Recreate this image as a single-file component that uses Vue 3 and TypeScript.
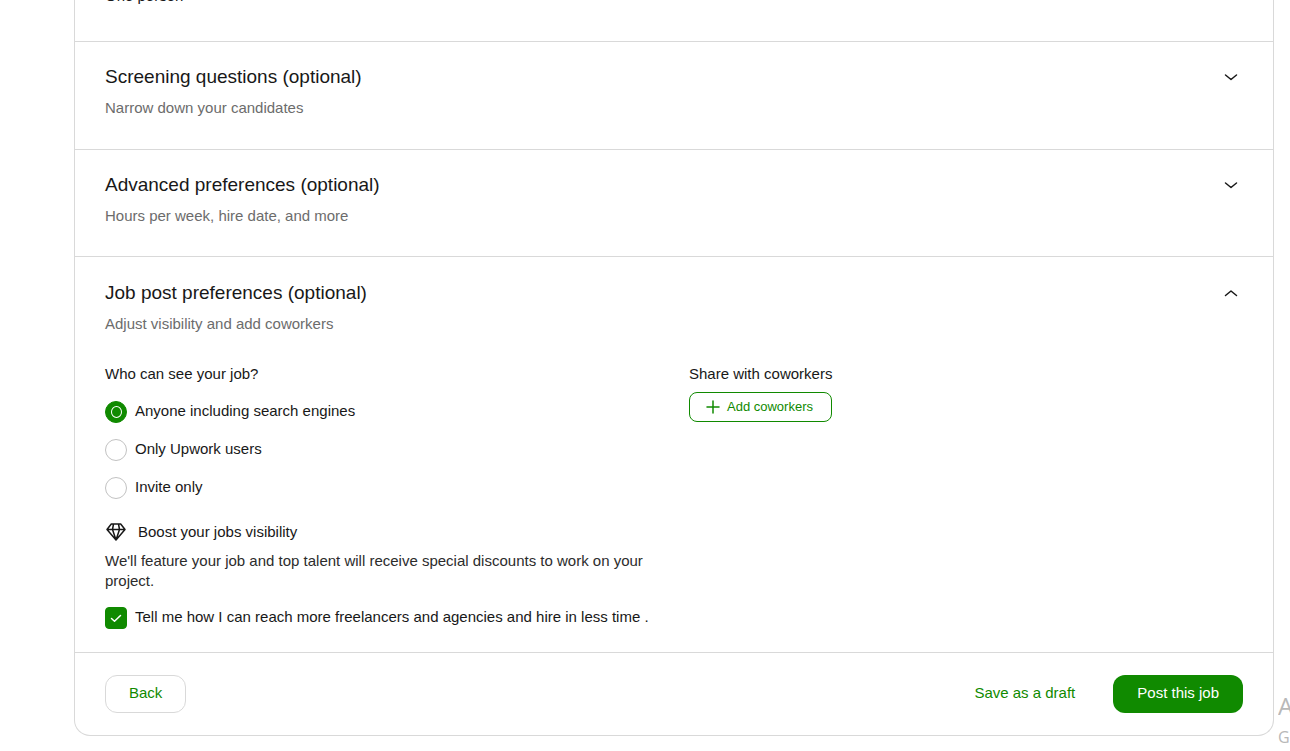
<script setup lang="ts">
import { ref } from 'vue'

interface Panel {
  id: string
  title: string
  hint: string
}

const panels: Panel[] = [
  { id: 'screening', title: 'Screening questions (optional)', hint: 'Narrow down your candidates' },
  { id: 'advanced', title: 'Advanced preferences (optional)', hint: 'Hours per week, hire date, and more' },
]

const audiences = [
  { value: 'anyone', label: 'Anyone including search engines' },
  { value: 'members', label: 'Only Upwork users' },
  { value: 'invite', label: 'Invite only' },
]

const audience = ref('anyone')
const boost = ref(true)
const open = ref(true)
</script>

<template>
  <main class="page">
    <form class="card" @submit.prevent>
      <section class="panel talent">One person</section>

      <section v-for="panel in panels" :key="panel.id" class="panel" :class="panel.id">
        <header class="head">
          <h2 class="title">{{ panel.title }}</h2>
          <button class="toggle" type="button" :aria-label="`Expand ${panel.title}`" aria-expanded="false">
            <svg viewBox="0 0 14 8" width="14" height="8"><path d="M1.500 2 7 6.500 12.500 2" /></svg>
          </button>
        </header>
        <p class="hint">{{ panel.hint }}</p>
      </section>

      <section class="panel visibility">
        <header class="head">
          <h2 class="title">Job post preferences (optional)</h2>
          <button class="toggle" type="button" aria-label="Toggle job post preferences" :aria-expanded="open" @click="open = !open">
            <svg viewBox="0 0 14 8" width="14" height="8"><path d="M1.500 6.500 7 2 12.500 6.500" /></svg>
          </button>
        </header>
        <p class="hint">Adjust visibility and add coworkers</p>

        <div v-show="open" class="columns">
          <div>
            <fieldset class="audience">
              <legend class="label">Who can see your job?</legend>
              <label v-for="item in audiences" :key="item.value" class="choice">
                <input v-model="audience" class="radio" type="radio" name="audience" :value="item.value" />
                <span>{{ item.label }}</span>
              </label>
            </fieldset>

            <h3 class="boost">
              <svg class="gem" viewBox="0 0 22 20" width="22" height="20">
                <path d="M6.300 2h9.400L20 7.500 11 18 2 7.500zM2 7.500h18M8.500 2 7.500 7.500 11 18l3.500-10.500L13.500 2" />
              </svg>
              Boost your jobs visibility
            </h3>
            <p class="text">We'll feature your job and top talent will receive special discounts to work on your project.</p>
            <label class="choice">
              <span class="tick">
                <input v-model="boost" class="check" type="checkbox" />
                <svg v-if="boost" viewBox="0 0 22 22" width="22" height="22"><path d="M6.500 11.500 9.500 14.200 15.500 8.500" /></svg>
              </span>
              <span>Tell me how I can reach more freelancers and agencies and hire in less time .</span>
            </label>
          </div>

          <div>
            <p class="label">Share with coworkers</p>
            <button class="btn add" type="button">
              <svg viewBox="0 0 14 14" width="14" height="14"><path d="M7 1v12M1 7h12" /></svg>
              Add coworkers
            </button>
          </div>
        </div>
      </section>

      <footer class="actions">
        <button class="btn back" type="button">Back</button>
        <button class="btn draft" type="button">Save as a draft</button>
        <button class="btn post" type="submit">Post this job</button>
      </footer>
    </form>

    <aside class="system">
      <span class="system-title">A</span>
      <span class="system-text">G</span>
    </aside>
  </main>
</template>

<style>
body {
  margin: 0;
  background: #fff;
}
</style>

<style scoped>
.page {
  position: relative;
  min-height: 100vh;
  overflow: hidden;
  box-sizing: border-box;
  padding: 0 16px 0 74px;
  font: 15px/20px "Liberation Sans", Arial, sans-serif;
  color: #181818;
}
.card {
  border: 1px solid #d9d9d9;
  border-top: 0;
  border-radius: 0 0 16px 16px;
}
.panel {
  padding: 23px 30px;
  border-bottom: 1px solid #d9d9d9;
}
.screening {
  padding-bottom: 31px;
}
.advanced {
  padding-bottom: 30px;
}
.visibility {
  padding-top: 24px;
}
.talent {
  margin-top: -14px;
  padding-top: 0;
  padding-bottom: 35px;
}
.head {
  display: flex;
  align-items: center;
  justify-content: space-between;
}
.title,
.boost,
.hint,
.text,
.label {
  margin: 0;
  font-weight: 400;
}
.title {
  font-size: 19px;
  line-height: 24px;
}
.hint {
  margin-top: 9px;
  color: #6c6c6c;
}
.toggle {
  display: flex;
  padding: 4px;
  margin-right: 1px;
  border: 0;
  background: none;
  color: #181818;
  cursor: pointer;
}
svg {
  fill: none;
  stroke: currentColor;
  stroke-width: 1.5;
  stroke-linecap: round;
  stroke-linejoin: round;
}
.columns {
  display: grid;
  grid-template-columns: 1fr 1fr;
  gap: 30px;
  margin-top: 30px;
}
.audience {
  display: grid;
  gap: 16px;
  margin: 0;
  padding: 0;
  border: 0;
}
.audience .label {
  padding: 0;
  margin-bottom: 17px;
}
.choice {
  display: flex;
  gap: 8px;
  line-height: 20px;
}
.radio,
.check {
  display: grid;
  place-items: center;
  flex: none;
  width: 22px;
  height: 22px;
  margin: 0;
  appearance: none;
  border: 1px solid #c2c2c2;
  border-radius: 50%;
}
.check {
  border-radius: 4px;
}
.radio:checked,
.check:checked {
  border-color: #108a00;
  background: #108a00;
}
.radio:checked::after {
  content: "";
  width: 9px;
  height: 10px;
  border: 1px solid #fff;
  border-radius: 50%;
}
.tick {
  display: grid;
  flex: none;
  color: #fff;
}
.tick > * {
  grid-area: 1 / 1;
}
.tick svg {
  z-index: 1;
  pointer-events: none;
}
.boost {
  display: flex;
  align-items: center;
  gap: 11px;
  margin-top: 23px;
  font-size: 15px;
}
.text {
  margin: 9px 0 16px;
  color: #2c2c2c;
}
.btn {
  display: flex;
  align-items: center;
  justify-content: center;
  box-sizing: border-box;
  height: 38px;
  padding: 0 23px 2px;
  border: 1px solid transparent;
  border-radius: 12px;
  background: none;
  color: #108a00;
  font: inherit;
  cursor: pointer;
}
.add {
  gap: 7px;
  height: 30px;
  margin-top: 8px;
  padding: 0 18px 0 16px;
  border-color: #108a00;
  border-radius: 8px;
  font-size: 13px;
}
.actions {
  display: flex;
  gap: 14px;
  padding: 22px 30px;
}
.back {
  margin-right: auto;
  border-color: #d9d9d9;
}
.post {
  background: #108a00;
  color: #fff;
  font-weight: 500;
}
.system {
  position: absolute;
  right: 0;
  bottom: 2px;
  display: grid;
  gap: 3px;
  width: 12px;
  overflow: hidden;
  color: #b8b8b8;
  font-family: "Open Sans", sans-serif;
}
.system-title {
  font-size: 24px;
  line-height: 32px;
}
.system-text {
  font-size: 16px;
  line-height: 24px;
}
</style>
